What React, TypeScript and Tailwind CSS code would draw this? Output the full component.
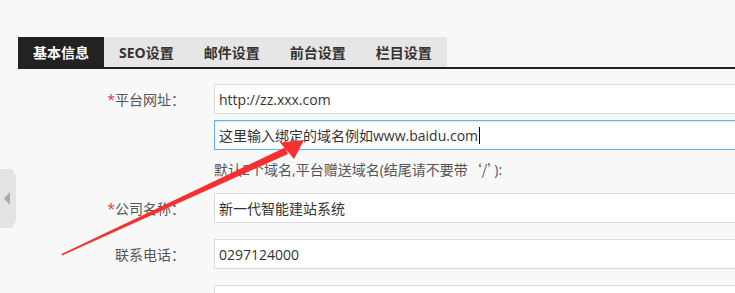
import React from 'react';

const tabs = ['基本信息', 'SEO设置', '邮件设置', '前台设置', '栏目设置'];

const font = { fontFamily: '"Open Sans", "Noto Sans CJK SC", sans-serif' };

const Field: React.FC<{ label: string; required?: boolean; value: string }> = ({ label, required, value }) => (
  <div className="flex items-center">
    <div className="w-[185px] shrink-0 text-right text-[14px] text-[#555]">
      {required && <span className="text-[#e4393c]">*</span>}
      {label}
    </div>
    <div className="ml-[29px] h-[30px] w-[600px] shrink-0 flex items-center border border-[#dcdcdc] bg-white pl-[4px] text-[14px] text-[#333]">
      {value}
    </div>
  </div>
);

const App: React.FC = () => {
  return (
    <div className="relative h-[293px] w-[735px] overflow-hidden bg-[#f8f8f8]" style={font}>
      <div className="ml-[18px] pt-[37px]">
        <div className="flex h-[32px] border-b-2 border-[#222]">
          <div className="flex bg-[#e6e6e6]">
            {tabs.map((t, i) => (
              <div
                key={t}
                className={
                  i === 0
                    ? 'flex h-[30px] items-center bg-[#222] px-[15px] text-[14px] font-bold text-white'
                    : 'flex h-[30px] items-center px-[15px] text-[14px] font-bold text-[#333]'
                }
              >
                {t}
              </div>
            ))}
          </div>
        </div>
      </div>

      <div className="mt-[15px] flex flex-col">
        <Field label="平台网址：" required value="http://zz.xxx.com" />
        <div className="ml-[214px] mt-[6px] flex h-[30px] w-[600px] items-center border border-[#66afe9] bg-white pl-[4px] text-[14px] text-[#333] shadow-[inset_0_1px_2px_rgba(102,175,233,0.35)]">
          这里输入绑定的域名例如www.baidu.com
          <span className="ml-[1px] inline-block h-[17px] w-px bg-black" />
        </div>
        <div className="ml-[214px] mt-[9px] h-[20px] text-[14px] leading-[20px] text-[#555]">
          默认2个域名,平台赠送域名(结尾请不要带
          <span style={{ fontFamily: '"Noto Sans CJK SC", sans-serif' }}>‘/’</span>):
        </div>
        <div className="mt-[14px] flex flex-col gap-[16px]">
          <Field label="公司名称：" required value="新一代智能建站系统" />
          <Field label="联系电话：" value="0297124000" />
          <Field label="" value="" />
        </div>
      </div>

      {/* side toggle */}
      <div className="absolute left-0 top-[169px] flex h-[59px] w-[16px] items-center bg-[#e4e4e4] [clip-path:polygon(0_0,75%_0,100%_7px,100%_calc(100%-7px),75%_100%,0_100%)]">
        <svg width="16" height="59" viewBox="0 0 16 59">
          <polygon points="4,29.5 10,23 10,36" fill="#aaa" />
        </svg>
      </div>

      {/* red annotation arrow */}
      <svg className="pointer-events-none absolute left-0 top-0" width="735" height="293" viewBox="0 0 735 293">
        <polygon points="62,255.5 61.5,254 285,147.5 288,154" fill="#f5302f" />
        <polygon points="304,140 280,142.5 294,159" fill="#f5302f" />
      </svg>
    </div>
  );
};

export default App;
